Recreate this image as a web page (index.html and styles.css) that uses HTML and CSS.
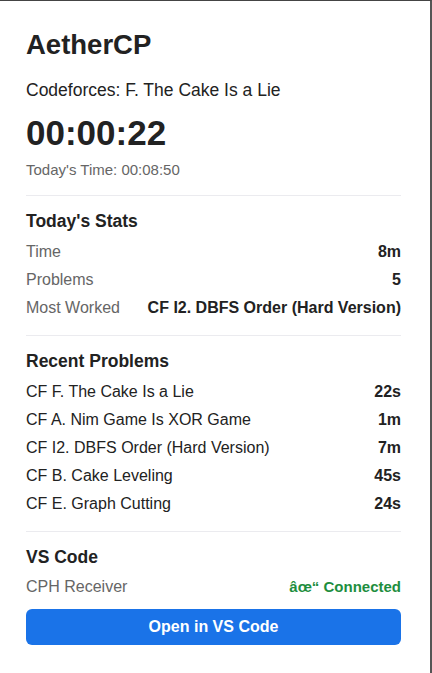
FILE: index.html
```html
<!DOCTYPE html>
<html lang="en">
<head>
  <meta charset="UTF-8" />
  <meta name="viewport" content="width=device-width, initial-scale=1.0"/>
  <title>AetherCP</title>
  <link rel="stylesheet" href="styles.css">
</head>
<body>
  <div class="panel">
    <h1>AetherCP</h1>
    <div class="problem">Codeforces: F. The Cake Is a Lie</div>
    <div class="timer">00:00:22</div>
    <div class="today">Today's Time: 00:08:50</div>

    <div class="section">
      <h2>Today's Stats</h2>
      <div class="row"><span class="label">Time</span><span class="value">8m</span></div>
      <div class="row"><span class="label">Problems</span><span class="value">5</span></div>
      <div class="row"><span class="label">Most Worked</span><span class="value">CF I2. DBFS Order (Hard Version)</span></div>
    </div>

    <div class="section">
      <h2>Recent Problems</h2>
      <div class="row"><span class="name">CF F. The Cake Is a Lie</span><span class="value">22s</span></div>
      <div class="row"><span class="name">CF A. Nim Game Is XOR Game</span><span class="value">1m</span></div>
      <div class="row"><span class="name">CF I2. DBFS Order (Hard Version)</span><span class="value">7m</span></div>
      <div class="row"><span class="name">CF B. Cake Leveling</span><span class="value">45s</span></div>
      <div class="row"><span class="name">CF E. Graph Cutting</span><span class="value">24s</span></div>
    </div>

    <div class="section">
      <h2>VS Code</h2>
      <div class="row"><span class="label">CPH Receiver</span><span class="status">âœ“ Connected</span></div>
      <button class="open-btn">Open in VS Code</button>
    </div>
  </div>
</body>
</html>
```

FILE: styles.css
```css
html, body {
  height: 100%;
}
body {
  font-family: "Liberation Sans", Arial, sans-serif;
  margin: 0;
  padding: 0;
  background: #fff;
  color: #222;
  box-sizing: border-box;
  border-top: 1px solid #444;
  border-right: 2px solid #555;
}
.panel {
  padding: 24px 29px 20px 26px;
}
h1 {
  font-size: 27.5px;
  margin: 4px 0 0;
  line-height: 32px;
}
.problem {
  font-size: 17.5px;
  margin-top: 19px;
  line-height: 20px;
}
.timer {
  font-size: 35px;
  font-weight: bold;
  line-height: 42px;
  margin-top: 12px;
}
.today {
  font-size: 15px;
  color: #666;
  margin-top: 7px;
  padding-bottom: 3px;
  line-height: 18px;
}
.section {
  border-top: 1px solid #ebebef;
  margin-top: 13px;
  padding-top: 15px;
}
h2 {
  font-size: 17.5px;
  margin: 0 0 7px;
  line-height: 20px;
}
.row {
  display: flex;
  justify-content: space-between;
  align-items: center;
  font-size: 16px;
  line-height: 28px;
}
.section:last-child .row {
  line-height: 26px;
}
.label {
  color: #666;
}
.name {
  color: #222;
}
.value {
  font-weight: bold;
}
.status {
  font-size: 15px;
  font-weight: bold;
  color: #1e8e3e;
}
.open-btn {
  display: block;
  width: 100%;
  margin-top: 9px;
  padding: 9px 8px;
  background-color: #1a73e8;
  color: #fff;
  border: none;
  border-radius: 6px;
  font-family: inherit;
  font-size: 16px;
  line-height: 18px;
  font-weight: bold;
  cursor: pointer;
}
```
